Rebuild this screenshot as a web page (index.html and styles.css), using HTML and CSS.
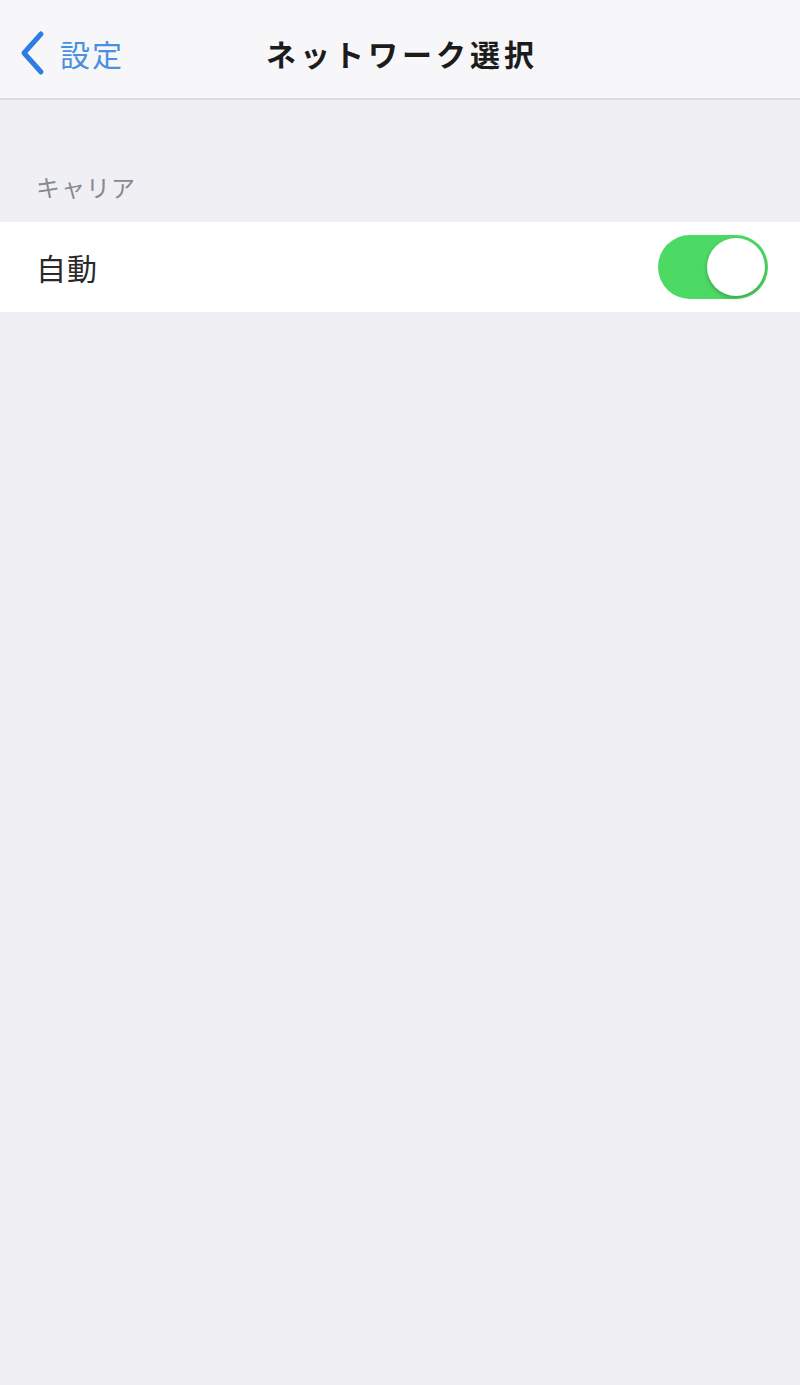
FILE: index.html
```html
<!DOCTYPE html>
<html lang="ja">
<head>
  <meta charset="UTF-8" />
  <meta name="viewport" content="width=device-width, initial-scale=1.0"/>
  <title>ネットワーク選択</title>
  <link rel="stylesheet" href="styles.css">
</head>
<body>
  <div class="navbar">
    <a class="back" href="#">
      <svg class="chevron" viewBox="0 0 28 46" width="28" height="46">
        <path d="M23 4 L6 23 L23 42" fill="none" stroke="#2f7de1" stroke-width="5" stroke-linecap="round" stroke-linejoin="round"/>
      </svg>
      <span>設定</span>
    </a>
    <div class="title">ネットワーク選択</div>
  </div>

  <div class="section-header">キャリア</div>
  <div class="group">
    <div class="row">
      <span class="label">自動</span>
      <div class="switch on"><div class="knob"></div></div>
    </div>
  </div>
</body>
</html>
```

FILE: styles.css
```css
body {
  margin: 0;
  background: #efeff4;
  font-family: "Noto Sans CJK JP", "Noto Sans", sans-serif;
  color: #222;
  height: 1385px;
}

.navbar {
  position: relative;
  height: 100px;
  padding-top: 8px;
  background: #f7f7f9;
  border-bottom: 2px solid #dcdce0;
  box-sizing: border-box;
  display: flex;
  align-items: center;
  justify-content: center;
}

.back {
  position: absolute;
  left: 18px;
  top: 8px;
  bottom: 0;
  display: flex;
  align-items: center;
  gap: 14px;
  color: #4a90e2;
  text-decoration: none;
  font-size: 30px;
  letter-spacing: 2px;
}

.title {
  font-size: 30px;
  font-weight: bold;
  color: #1c1c1c;
  letter-spacing: 4px;
  margin-left: 4px;
}

.section-header {
  padding: 67px 36px 15px;
  font-size: 24px;
  line-height: 40px;
  color: #8a8a8e;
  letter-spacing: 1px;
}

.group {
  background: #fff;
}

.row {
  height: 90px;
  display: flex;
  align-items: center;
  justify-content: space-between;
  padding: 0 32px 0 36px;
}

.label {
  font-size: 30px;
  color: #2a2a2a;
  letter-spacing: 1px;
}

.switch {
  width: 110px;
  height: 64px;
  border-radius: 32px;
  background: #e5e5ea;
  position: relative;
}

.switch.on { background: #4cd964; }

.knob {
  position: absolute;
  top: 3px;
  right: 3px;
  width: 58px;
  height: 58px;
  border-radius: 50%;
  background: #fff;
  box-shadow: 0 2px 4px rgba(0, 0, 0, 0.25);
}
```
